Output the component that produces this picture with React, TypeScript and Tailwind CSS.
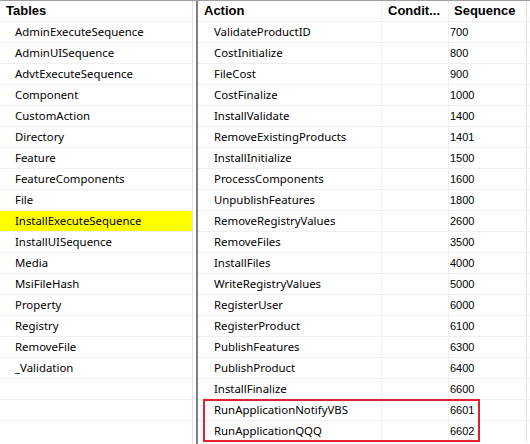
import React from 'react';

const tables = [
  'AdminExecuteSequence',
  'AdminUISequence',
  'AdvtExecuteSequence',
  'Component',
  'CustomAction',
  'Directory',
  'Feature',
  'FeatureComponents',
  'File',
  'InstallExecuteSequence',
  'InstallUISequence',
  'Media',
  'MsiFileHash',
  'Property',
  'Registry',
  'RemoveFile',
  '_Validation',
  '',
  '',
  '',
];

const actions: [string, string][] = [
  ['ValidateProductID', '700'],
  ['CostInitialize', '800'],
  ['FileCost', '900'],
  ['CostFinalize', '1000'],
  ['InstallValidate', '1400'],
  ['RemoveExistingProducts', '1401'],
  ['InstallInitialize', '1500'],
  ['ProcessComponents', '1600'],
  ['UnpublishFeatures', '1800'],
  ['RemoveRegistryValues', '2600'],
  ['RemoveFiles', '3500'],
  ['InstallFiles', '4000'],
  ['WriteRegistryValues', '5000'],
  ['RegisterUser', '6000'],
  ['RegisterProduct', '6100'],
  ['PublishFeatures', '6300'],
  ['PublishProduct', '6400'],
  ['InstallFinalize', '6600'],
  ['RunApplicationNotifyVBS', '6601'],
  ['RunApplicationQQQ', '6602'],
];

const selected = 'InstallExecuteSequence';

export default function App() {
  return (
    <div className="w-[530px] h-[444px] bg-white border-t border-[#a0a0a0] flex overflow-hidden text-black">
      {/* tables list */}
      <div className="w-[192px] flex flex-col shrink-0">
        <div className="h-[20px] flex items-center pl-[6px] font-['Liberation_Sans',Arial,sans-serif] font-bold text-[13px]">
          Tables
        </div>
        {tables.map((name, i) => (
          <div
            key={i}
            className={`h-[21px] border-t border-[#f0f0f0] flex items-center pl-[15px] font-['Noto_Sans',sans-serif] text-[11.4px] ${
              name === selected ? 'bg-[#ffff00]' : ''
            }`}
          >
            {name}
          </div>
        ))}
      </div>

      {/* splitter */}
      <div className="w-[6px] shrink-0 border-l border-[#e3e3e3] border-r-2 border-r-[#808080]" />

      {/* actions grid */}
      <div className="flex-1 flex flex-col relative">
        <div className="h-[20px] flex font-['Liberation_Sans',Arial,sans-serif] font-bold text-[13px]">
          <div className="w-[184px] border-r border-[#f0f0f0] flex items-center pl-[6px]">Action</div>
          <div className="w-[67px] border-r border-[#f0f0f0] flex items-center pl-[6px]">Condit...</div>
          <div className="w-[78px] border-r border-[#e3e3e3] flex items-center pl-[5px]">Sequence</div>
        </div>
        <div className="relative">
          {actions.map(([name, seq]) => (
            <div key={name} className="h-[21px] flex border-t border-[#f0f0f0]">
              <div className="w-[184px] border-r border-[#f0f0f0] flex items-center pl-[16px] font-['Noto_Sans',sans-serif] text-[11.4px]">
                {name}
              </div>
              <div className="w-[67px] border-r border-[#f0f0f0]" />
              <div className="w-[78px] border-r border-[#e3e3e3] flex items-center pl-[1px] font-['Liberation_Sans',Arial,sans-serif] text-[11px]">
                {seq}
              </div>
            </div>
          ))}
          {/* highlight box */}
          <div className="absolute left-[5px] top-[378px] w-[277px] h-[43px] border-2 border-[#e3202b] pointer-events-none" />
        </div>
      </div>
    </div>
  );
}
